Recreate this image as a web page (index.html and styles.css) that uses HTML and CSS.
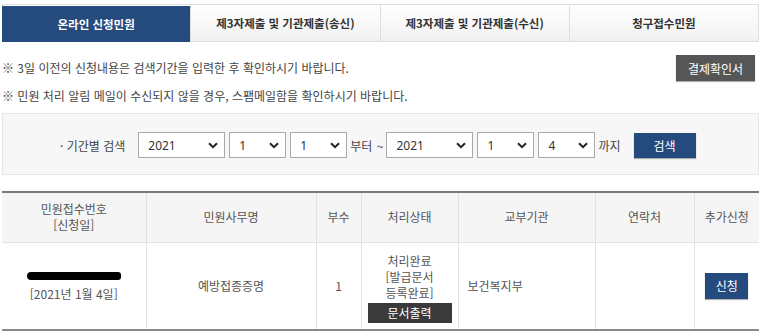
FILE: index.html
```html
<!DOCTYPE html>
<html lang="ko">
<head>
<meta charset="utf-8">
<link rel="stylesheet" href="styles.css">
</head>
<body>
<div class="page">
  <ul class="tabs">
    <li class="tab active">온라인 신청민원</li>
    <li class="tab">제3자제출 및 기관제출(송신)</li>
    <li class="tab">제3자제출 및 기관제출(수신)</li>
    <li class="tab">청구접수민원</li>
  </ul>

  <div class="notice">
    <div class="notice-row">
      <p class="note">※ 3일 이전의 신청내용은 검색기간을 입력한 후 확인하시기 바랍니다.</p>
      <button class="btn btn-gray">결제확인서</button>
    </div>
    <p class="note note2">※ 민원 처리 알림 메일이 수신되지 않을 경우, 스팸메일함을 확인하시기 바랍니다.</p>
  </div>

  <div class="search">
    <span class="search-label">· 기간별 검색</span>
    <select class="sel sel-year"><option>2021</option></select>
    <select class="sel sel-small"><option>1</option></select>
    <select class="sel sel-small sel-last"><option>1</option></select>
    <span class="search-text wide">부터 ~</span>
    <select class="sel sel-year"><option>2021</option></select>
    <select class="sel sel-small"><option>1</option></select>
    <select class="sel sel-small sel-last"><option>4</option></select>
    <span class="search-text">까지</span>
    <button class="btn btn-navy btn-search">검색</button>
  </div>

  <table class="list">
    <colgroup>
      <col class="c1"><col class="c2"><col class="c3"><col class="c4"><col class="c5"><col class="c6"><col class="c7">
    </colgroup>
    <thead>
      <tr>
        <th>민원접수번호<br>[신청일]</th>
        <th>민원사무명</th>
        <th>부수</th>
        <th>처리상태</th>
        <th>교부기관</th>
        <th>연락처</th>
        <th>추가신청</th>
      </tr>
    </thead>
    <tbody>
      <tr>
        <td><span class="redact"></span><br>[2021년 1월 4일]</td>
        <td>예방접종증명</td>
        <td>1</td>
        <td class="status">처리완료<br>[발급문서<br>등록완료]<br><button class="btn btn-dark">문서출력</button></td>
        <td class="left">보건복지부</td>
        <td></td>
        <td><button class="btn btn-navy btn-apply">신청</button></td>
      </tr>
    </tbody>
  </table>
</div>
</body>
</html>
```

FILE: styles.css
```css
* { box-sizing: border-box; }
html, body { margin: 0; padding: 0; background: #fff; }
body {
  font-family: "Noto Sans CJK KR", "Noto Sans", sans-serif;
  font-size: 12px;
  color: #444;
}
.page {
  width: 757px;
  margin-left: 2px;
}
.tabs {
  list-style: none;
  margin: 4px 0 0;
  padding: 0;
  display: flex;
  border: 1px solid #dedede;
  height: 38px;
}
.tab {
  flex: 1;
  display: flex;
  align-items: center;
  justify-content: center;
  font-weight: 700;
  font-size: 11.5px;
  color: #333;
  background: linear-gradient(#ffffff, #f1f1f1);
  border-left: 1px solid #dedede;
}
.tab:first-child { border-left: none; }
.tab.active {
  background: #254a7d;
  color: #fff;
  margin: 1px 0 -1px -1px;
}
.notice { margin-top: 13px; }
.notice-row {
  display: flex;
  align-items: center;
  justify-content: space-between;
  height: 26px;
}
.note { margin: 0; line-height: 18px; }
.note2 { margin-top: 6px; }
.btn {
  font-family: inherit;
  border: none;
  color: #fff;
  font-size: 12px;
  padding: 0;
  cursor: pointer;
}
.btn-gray {
  background: #565656;
  width: 79px;
  height: 26px;
  margin-right: 4px;
  box-shadow: 0 1px 1px rgba(0,0,0,0.3);
}
.btn-navy { background: #254a7d; box-shadow: 0 1px 1px rgba(0,0,0,0.3); }
.search {
  margin-top: 8px;
  height: 62px;
  background: #f7f7f7;
  border: 1px solid #e6e6e6;
  display: flex;
  align-items: center;
  padding-left: 57px;
  padding-top: 2px;
}
.search-label { margin-right: 13px; color: #444; }
.sel {
  appearance: none;
  -webkit-appearance: none;
  height: 26px;
  border: 1px solid #a9a9a9;
  background: #fff url("data:image/svg+xml,%3Csvg xmlns='http://www.w3.org/2000/svg' width='10' height='7' viewBox='0 0 10 7'%3E%3Cpath d='M1 1.2 L5 5.2 L9 1.2' fill='none' stroke='%23222' stroke-width='2'/%3E%3C/svg%3E") no-repeat right 6px center;
  font-family: "Noto Sans", sans-serif;
  font-size: 12px;
  color: #333;
  padding: 0 0 0 9px;
  margin-right: 4px;
  border-radius: 0;
}
.sel-year { width: 87px; }
.sel-small { width: 57px; }
.sel-last { margin-right: 3px; }
.search-text { margin: 0 3px 0 0; color: #444; }
.search-text.wide { word-spacing: 1px; margin-right: 3px; }
.btn-search { width: 62px; height: 25px; margin-left: 10px; }
.list {
  margin-top: 16px;
  width: 757px;
  border-collapse: collapse;
  table-layout: fixed;
  border-top: 2px solid #7a7a7a;
  border-bottom: 2px solid #8a8a8a;
}
.c1 { width: 144px; } .c2 { width: 170px; } .c3 { width: 45px; } .c4 { width: 97px; }
.c5 { width: 137px; } .c6 { width: 99px; } .c7 { width: 65px; }
.list th, .list td {
  border-left: 1px solid #e2e2e2;
  text-align: center;
  font-weight: 400;
  color: #555;
  padding: 0;
  line-height: 16px;
}
.list th:first-child, .list td:first-child { border-left: none; }
.list th { background: #f5f5f5; height: 50px; border-bottom: 1px solid #e2e2e2; }
.list td { height: 88px; }
.list td.left { text-align: left; padding-left: 9px; }
.list td.status { padding-top: 4px; }
.redact {
  display: inline-block;
  width: 94px;
  height: 8px;
  background: #000;
  border-radius: 4px 3px 3px 4px;
  margin-bottom: 6px;
  vertical-align: middle;
}
.btn-dark {
  background: #3a3a3a;
  width: 84px;
  height: 20px;
  margin-top: 2px;
  display: inline-block;
  vertical-align: top;
}
.btn-apply { width: 43px; height: 26px; }
```
